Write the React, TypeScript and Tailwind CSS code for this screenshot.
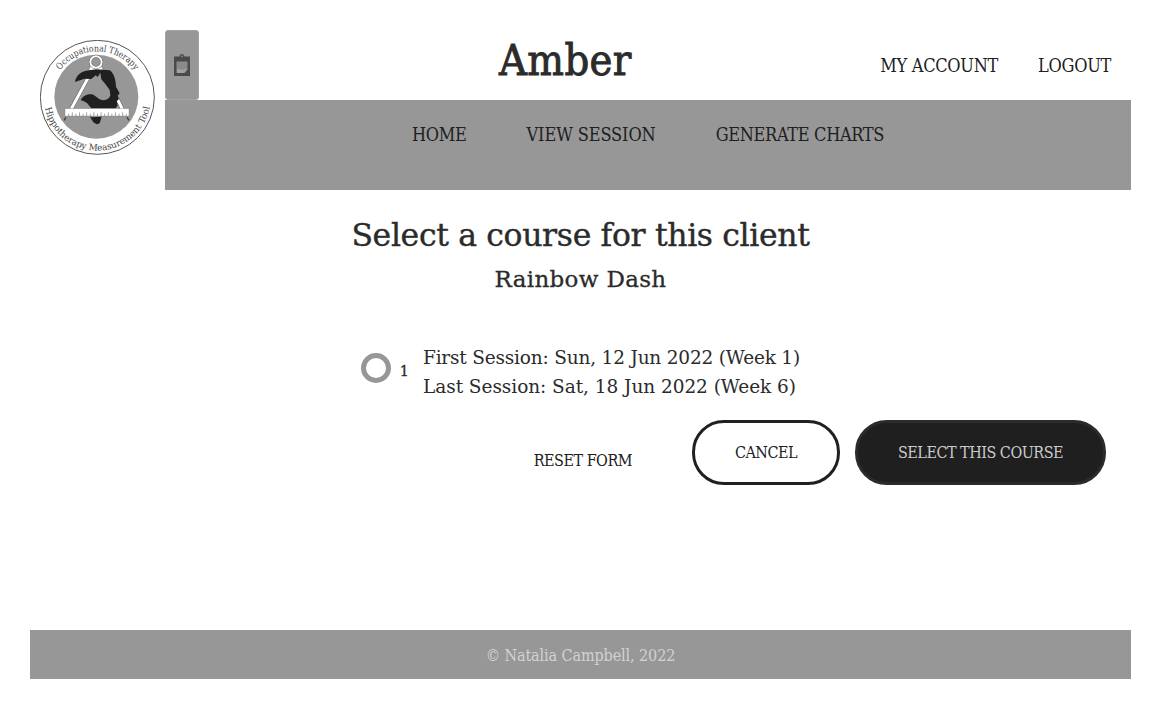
const ticks = Array.from({ length: 17 }, (_, i) => 116 + i * 10.8);

function Logo() {
  return (
    <svg className="size-[115px]" viewBox="30 30 345 345" role="img">
      <defs>
        <path id="arc-top" d="M64 202 A138 138 0 0 1 340 202" />
        <path id="arc-bottom" d="M42 202 A160 160 0 0 0 362 202" />
      </defs>
      <circle cx="202" cy="202" r="171" fill="#fff" stroke="#333" strokeWidth="2.5" />
      <circle cx="199" cy="200" r="126" fill="#979797" />
      <g fontFamily="'DejaVu Serif Condensed','DejaVu Serif',serif" fill="#454545" fontSize="27">
        <text>
          <textPath href="#arc-top" startOffset="87" textLength="260" lengthAdjust="spacingAndGlyphs">Occupational Therapy</textPath>
        </text>
        <text>
          <textPath href="#arc-bottom" startOffset="32" textLength="441" lengthAdjust="spacingAndGlyphs">Hippotherapy Measurement Tool</textPath>
        </text>
      </g>
      <g strokeLinecap="butt">
        <path d="M176 140 L124 236" strokeWidth="12" stroke="#555" />
        <path d="M176 140 L124 236" strokeWidth="9" stroke="#fff" />
        <path d="M262 206 L278 240" strokeWidth="12" stroke="#555" />
        <path d="M262 206 L278 240" strokeWidth="9" stroke="#fff" />
      </g>
      <path d="M182 106 Q198 118 214 106 L220 122 H176Z" fill="#fff" stroke="#555" strokeWidth="1" />
      <circle cx="198" cy="96" r="17" fill="none" stroke="#555" strokeWidth="9" />
      <circle cx="198" cy="96" r="17" fill="none" stroke="#fff" strokeWidth="6" />
      <path
        fill="#202020"
        d="M135 156 C139 136 152 124 178 121 L198 118 L240 121 C253 132 257 150 258 170 L269 190 L263 197 L267 207 L260 214 L263 226 L257 235 L184 235 C176 226 172 215 152 211 C158 198 172 190 190 194 L209 208 C225 215 238 207 241 196 L239 180 L226 162 L214 148 L211 128 L203 141 L197 136 L184 147 L163 146 L135 156Z"
      />
      <path d="M180 260 L187 262 L215 260 L209 280 L200 283 L190 277Z" fill="#202020" />
      <rect x="105" y="236" width="192" height="22" fill="#fff" stroke="#777" strokeWidth="1" />
      {ticks.map((x, i) => (
        <path key={x} d={`M${x} 258 V${i % 2 ? 247 : 251}`} stroke="#777" strokeWidth="2" />
      ))}
      <path d="M108 262 L102 271 M291 262 L297 271" stroke="#333" strokeWidth="3.5" />
    </svg>
  );
}

function Clipboard() {
  return (
    <svg className="h-6 w-[18px]" viewBox="0 0 18 24">
      <path d="M1 3.500h5.500a2.500 2.500 0 0 1 5 0H17V23H1z" fill="#4a4a4a" />
      <path d="M3.500 8.500h11V17l-3 3h-8z" fill="#8a8a8a" />
      <path d="M4 15.500 9 17l5-1.500-3 4.500H4z" fill="#a2a2a2" />
      <circle cx="9" cy="3.300" r="1" fill="#858585" />
    </svg>
  );
}

export default function App() {
  return (
    <div className="flex h-[709px] w-[1161px] flex-col bg-white p-[30px] font-['DejaVu_Serif_Condensed','DejaVu_Serif',serif] text-[#2b2b2b]">
      <header className="flex h-40">
        <div className="w-[135px] shrink-0 p-2.5">
          <Logo />
        </div>
        <div className="flex-1">
          <div className="flex h-[70px] items-start">
            <button className="flex h-[70px] w-[34px] items-center justify-center rounded-[3px] border border-[#a3a3a3] bg-[#979797]">
              <Clipboard />
            </button>
            <h1 className="ml-[300px] text-[43px] leading-[60px] tracking-[0.4px] [-webkit-text-stroke:0.9px_#2b2b2b]">
              Amber
            </h1>
            <div className="mr-5 ml-auto flex gap-10 text-[18px] leading-[72px] text-[#202020]">
              <a className="tracking-[-0.3px]">MY ACCOUNT</a>
              <a className="tracking-[-0.3px]">LOGOUT</a>
            </div>
          </div>
          <nav className="flex h-[90px] justify-center gap-[60px] bg-[#979797] text-[18px] leading-[70px] text-[#202020]">
            <a className="tracking-[-0.3px]">HOME</a>
            <a className="tracking-[-0.1px]">VIEW SESSION</a>
            <a className="tracking-[-0.33px]">GENERATE CHARTS</a>
          </nav>
        </div>
      </header>

      <main className="flex flex-1 flex-col pt-[23px]">
        <h2 className="text-center font-['DejaVu_Serif',serif] text-[31.5px] leading-[44px] tracking-[-0.35px] [-webkit-text-stroke:0.4px_#2b2b2b]">
          Select a course for this client
        </h2>
        <h3 className="text-center font-['DejaVu_Serif',serif] text-[23px] leading-[44px] tracking-[0.32px] [-webkit-text-stroke:0.3px_#2b2b2b]">
          Rainbow Dash
        </h3>
        <div className="mt-[42px] ml-[331px] flex h-[58px]">
          <span className="mt-[10px] size-[30px] rounded-full border-5 border-[#979797]" />
          <span className="mt-[15px] ml-[9px] w-[23px] text-[15px] leading-[26px] [-webkit-text-stroke:0.4px_#2b2b2b]">1</span>
          <div className="font-['DejaVu_Serif',serif] text-[18.5px] leading-[29px] whitespace-nowrap">
            <div className="tracking-[-0.19px]">First Session: Sun, 12 Jun 2022 (Week 1)</div>
            <div className="tracking-[-0.05px]">Last Session: Sat, 18 Jun 2022 (Week 6)</div>
          </div>
        </div>
        <div className="mt-[19px] mr-[25px] flex h-[65px] justify-end text-[16px] tracking-[-0.5px] text-[#202020]">
          <button className="mr-[60px] pt-4">RESET FORM</button>
          <button className="mr-[15px] w-[148px] rounded-[32px] border-3 border-[#202020]">CANCEL</button>
          <button className="w-[251px] rounded-[32px] border-3 border-[#2b2b2b] bg-[#1f1f1f] text-[#cbcbcb]">
            SELECT THIS COURSE
          </button>
        </div>
      </main>

      <footer className="h-[49px] bg-[#979797] text-center text-[16px] leading-[51px] tracking-[-0.1px] text-[#d2d2d2]">
        © Natalia Campbell, 2022
      </footer>
    </div>
  );
}
